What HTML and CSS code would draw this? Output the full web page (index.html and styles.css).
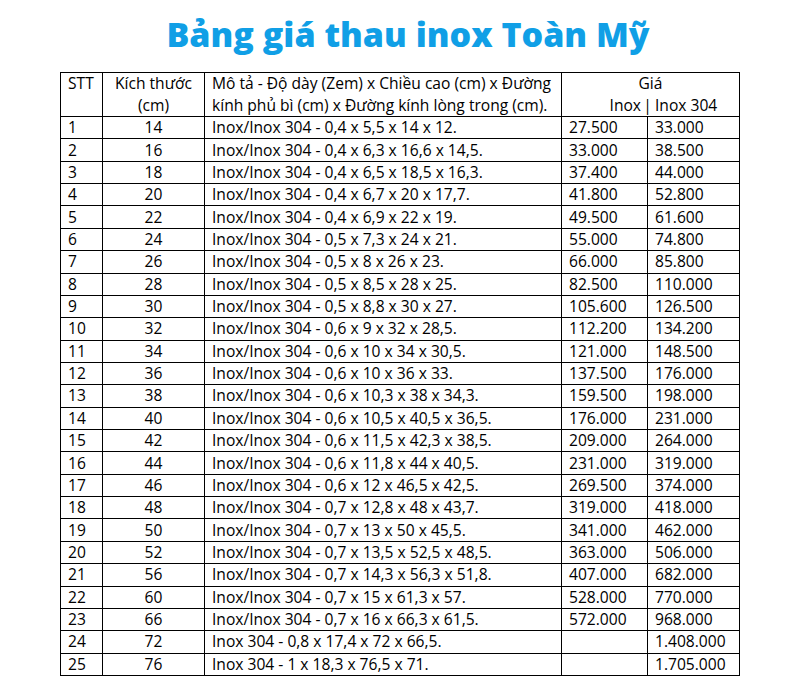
FILE: index.html
```html
<!DOCTYPE html>
<html lang="vi">
<head>
<meta charset="utf-8">
<title>Bảng giá thau inox Toàn Mỹ</title>
<link rel="stylesheet" href="styles.css">
</head>
<body>
<div class="page">
  <h1 class="title">Bảng giá thau inox Toàn Mỹ</h1>
  <table class="price-table">
    <colgroup>
      <col class="c-stt">
      <col class="c-size">
      <col class="c-desc">
      <col class="c-p1">
      <col class="c-p2">
    </colgroup>
    <thead>
      <tr class="head">
        <th class="left">STT</th>
        <th class="center">Kích thước<br>(cm)</th>
        <th class="left">Mô tả - Độ dày (Zem) x Chiều cao (cm) x Đường<br>kính phủ bì (cm) x Đường kính lòng trong (cm).</th>
        <th colspan="2" class="center gia">
          <div>Giá</div>
          <div class="sub"><span class="sub-a">Inox</span><span class="bar">|</span><span class="sub-b">Inox 304</span></div>
        </th>
      </tr>
    </thead>
    <tbody>
      <tr><td>1</td><td class="center">14</td><td>Inox/Inox 304 - 0,4 x 5,5 x 14 x 12.</td><td>27.500</td><td>33.000</td></tr>
      <tr><td>2</td><td class="center">16</td><td>Inox/Inox 304 - 0,4 x 6,3 x 16,6 x 14,5.</td><td>33.000</td><td>38.500</td></tr>
      <tr><td>3</td><td class="center">18</td><td>Inox/Inox 304 - 0,4 x 6,5 x 18,5 x 16,3.</td><td>37.400</td><td>44.000</td></tr>
      <tr><td>4</td><td class="center">20</td><td>Inox/Inox 304 - 0,4 x 6,7 x 20 x 17,7.</td><td>41.800</td><td>52.800</td></tr>
      <tr><td>5</td><td class="center">22</td><td>Inox/Inox 304 - 0,4 x 6,9 x 22 x 19.</td><td>49.500</td><td>61.600</td></tr>
      <tr><td>6</td><td class="center">24</td><td>Inox/Inox 304 - 0,5 x 7,3 x 24 x 21.</td><td>55.000</td><td>74.800</td></tr>
      <tr><td>7</td><td class="center">26</td><td>Inox/Inox 304 - 0,5 x 8 x 26 x 23.</td><td>66.000</td><td>85.800</td></tr>
      <tr><td>8</td><td class="center">28</td><td>Inox/Inox 304 - 0,5 x 8,5 x 28 x 25.</td><td>82.500</td><td>110.000</td></tr>
      <tr><td>9</td><td class="center">30</td><td>Inox/Inox 304 - 0,5 x 8,8 x 30 x 27.</td><td>105.600</td><td>126.500</td></tr>
      <tr><td>10</td><td class="center">32</td><td>Inox/Inox 304 - 0,6 x 9 x 32 x 28,5.</td><td>112.200</td><td>134.200</td></tr>
      <tr><td>11</td><td class="center">34</td><td>Inox/Inox 304 - 0,6 x 10 x 34 x 30,5.</td><td>121.000</td><td>148.500</td></tr>
      <tr><td>12</td><td class="center">36</td><td>Inox/Inox 304 - 0,6 x 10 x 36 x 33.</td><td>137.500</td><td>176.000</td></tr>
      <tr><td>13</td><td class="center">38</td><td>Inox/Inox 304 - 0,6 x 10,3 x 38 x 34,3.</td><td>159.500</td><td>198.000</td></tr>
      <tr><td>14</td><td class="center">40</td><td>Inox/Inox 304 - 0,6 x 10,5 x 40,5 x 36,5.</td><td>176.000</td><td>231.000</td></tr>
      <tr><td>15</td><td class="center">42</td><td>Inox/Inox 304 - 0,6 x 11,5 x 42,3 x 38,5.</td><td>209.000</td><td>264.000</td></tr>
      <tr><td>16</td><td class="center">44</td><td>Inox/Inox 304 - 0,6 x 11,8 x 44 x 40,5.</td><td>231.000</td><td>319.000</td></tr>
      <tr><td>17</td><td class="center">46</td><td>Inox/Inox 304 - 0,6 x 12 x 46,5 x 42,5.</td><td>269.500</td><td>374.000</td></tr>
      <tr><td>18</td><td class="center">48</td><td>Inox/Inox 304 - 0,7 x 12,8 x 48 x 43,7.</td><td>319.000</td><td>418.000</td></tr>
      <tr><td>19</td><td class="center">50</td><td>Inox/Inox 304 - 0,7 x 13 x 50 x 45,5.</td><td>341.000</td><td>462.000</td></tr>
      <tr><td>20</td><td class="center">52</td><td>Inox/Inox 304 - 0,7 x 13,5 x 52,5 x 48,5.</td><td>363.000</td><td>506.000</td></tr>
      <tr><td>21</td><td class="center">56</td><td>Inox/Inox 304 - 0,7 x 14,3 x 56,3 x 51,8.</td><td>407.000</td><td>682.000</td></tr>
      <tr><td>22</td><td class="center">60</td><td>Inox/Inox 304 - 0,7 x 15 x 61,3 x 57.</td><td>528.000</td><td>770.000</td></tr>
      <tr><td>23</td><td class="center">66</td><td>Inox/Inox 304 - 0,7 x 16 x 66,3 x 61,5.</td><td>572.000</td><td>968.000</td></tr>
      <tr><td>24</td><td class="center">72</td><td>Inox 304 - 0,8 x 17,4 x 72 x 66,5.</td><td></td><td>1.408.000</td></tr>
      <tr><td>25</td><td class="center">76</td><td>Inox 304 - 1 x 18,3 x 76,5 x 71.</td><td></td><td>1.705.000</td></tr>
    </tbody>
  </table>
</div>
</body>
</html>
```
FILE: styles.css
```css
html, body {
  margin: 0;
  padding: 0;
  background: #ffffff;
}

.page {
  width: 800px;
  padding-top: 8px;
}

.title {
  margin: 0;
  height: 64px;
  line-height: 52px;
  text-align: center;
  font-family: "Open Sans", "Noto Sans", sans-serif;
  font-weight: 800;
  font-size: 34px;
  color: #109fe6;
  padding-left: 16px;
}

.price-table {
  margin-left: 60px;
  border-collapse: collapse;
  table-layout: fixed;
  width: 679px;
  font-family: "Open Sans", "Noto Sans", sans-serif;
  font-size: 15.6px;
  color: #000;
}

.c-stt { width: 42px; }
.c-size { width: 102px; }
.c-desc { width: 357px; }
.c-p1 { width: 86px; }
.c-p2 { width: 92px; }

.price-table th,
.price-table td {
  border: 1px solid #000;
  padding: 0 0 0 7px;
  font-weight: 400;
  text-align: left;
  vertical-align: middle;
  white-space: nowrap;
  overflow: hidden;
}

.price-table th {
  height: 43px;
  line-height: 21.5px;
  vertical-align: top;
  padding-top: 0;
}

.price-table td {
  height: 21.36px;
  line-height: 21px;
}

.price-table .center {
  text-align: center;
  padding-left: 0;
}

.gia .sub {
  display: flex;
  align-items: center;
}

.sub-a {
  width: 79px;
  text-align: right;
}

.bar {
  width: 13px;
  text-align: center;
}

.sub-b {
  text-align: left;
  padding-left: 1px;
}
```
